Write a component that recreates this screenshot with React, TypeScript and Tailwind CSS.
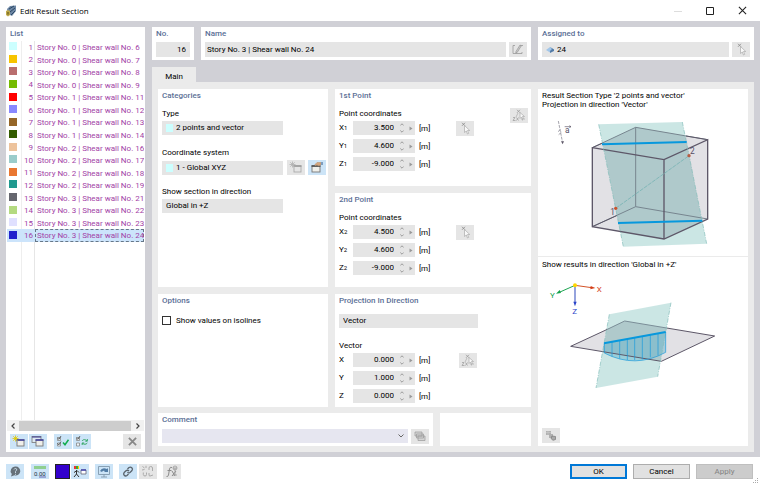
import type { ReactNode } from "react";

const items: [string, string][] = [
  ["#ccffff", "Story No. 0 | Shear wall No. 6"],
  ["#f7c400", "Story No. 0 | Shear wall No. 7"],
  ["#b96e6e", "Story No. 0 | Shear wall No. 8"],
  ["#74bb00", "Story No. 0 | Shear wall No. 9"],
  ["#ff0000", "Story No. 1 | Shear wall No. 11"],
  ["#8888ff", "Story No. 1 | Shear wall No. 12"],
  ["#956628", "Story No. 1 | Shear wall No. 13"],
  ["#335c00", "Story No. 1 | Shear wall No. 14"],
  ["#edc39c", "Story No. 2 | Shear wall No. 16"],
  ["#9acccb", "Story No. 2 | Shear wall No. 17"],
  ["#e97731", "Story No. 2 | Shear wall No. 18"],
  ["#20998e", "Story No. 2 | Shear wall No. 19"],
  ["#65666e", "Story No. 3 | Shear wall No. 21"],
  ["#b4da80", "Story No. 3 | Shear wall No. 22"],
  ["#e0e0ff", "Story No. 3 | Shear wall No. 23"],
  ["#2222cc", "Story No. 3 | Shear wall No. 24"],
];

function Panel({ title, className = "", children }: { title?: string; className?: string; children?: ReactNode }) {
  return (
    <section className={`relative min-w-0 bg-white px-1 pt-px ${className}`}>
      {title && <h2 className="h-3 leading-3 text-[#5b6f96] font-medium">{title}</h2>}
      {children}
    </section>
  );
}

function IconButton({ label, blue = false, className = "", children }: { label: string; blue?: boolean; className?: string; children: ReactNode }) {
  return (
    <button
      type="button"
      aria-label={label}
      className={`flex h-[15px] w-[18px] shrink-0 items-center justify-center ${blue ? "bg-[#cce4f7]" : "bg-[#e5e5e5]"} ${className}`}
    >
      {children}
    </button>
  );
}

function Choice({ id, value, swatch = false, className = "" }: { id: string; value: string; swatch?: boolean; className?: string }) {
  return (
    <div className={`flex h-[14px] shrink-0 items-center bg-[#e5e5e5] pl-1 ${className}`}>
      {swatch && <span className="mr-[3px] h-2 w-[7px] shrink-0 bg-[#ccffff]" />}
      <select id={id} aria-label={value} className="h-[14px] min-w-0 flex-1 appearance-none bg-transparent leading-[14px] outline-none">
        <option>{value}</option>
      </select>
    </div>
  );
}

function Coordinate({ group, axis, sub, value }: { group: string; axis: string; sub?: string; value: string }) {
  const id = `${group}-${axis}`;
  return (
    <div className="flex h-[14px] items-center">
      <label htmlFor={id} className="w-[14px] leading-[14px]">
        {axis}
        {sub && <span className="text-[6px]">{sub}</span>}
      </label>
      <div className="flex h-[14px] w-[62px] items-center bg-[#e5e5e5]">
        <input id={id} defaultValue={value} className="h-[14px] w-[41px] bg-transparent text-right leading-[14px] outline-none" />
        <span className="ml-[6px] flex flex-col gap-1">
          <button type="button" aria-label={`Increase ${axis}`} className="block">
            <svg width="4" height="3" viewBox="0 0 4 3"><path d="M.3 2.5 2 .8l1.700 1.700" fill="none" stroke="#888" strokeWidth=".8" /></svg>
          </button>
          <button type="button" aria-label={`Decrease ${axis}`} className="block">
            <svg width="4" height="3" viewBox="0 0 4 3"><path d="M.3.5 2 2.200 3.700.5" fill="none" stroke="#888" strokeWidth=".8" /></svg>
          </button>
        </span>
        <button type="button" aria-label={`More ${axis}`} className="ml-[5px]">
          <svg width="4" height="5" viewBox="0 0 4 5"><path d="M.5.5 3.500 2.500.5 4.500z" fill="#999" /></svg>
        </button>
      </div>
      <span className="ml-1">[m]</span>
    </div>
  );
}

function PickIcon({ two = false }: { two?: boolean }) {
  return (
    <svg width="14" height="13" viewBox="0 0 14 13" fill="none">
      {two ? (
        <g>
          <path d="M5 .8l3 3M8 .8l-3 3" stroke="#999" strokeWidth=".8" />
          <path d="M6 4 4 8M9 10h4M10.500 9v2.500" stroke="#aaa" strokeWidth=".7" />
          <path d="M1 8.500h2l-2 3h2.500M4.500 8.500l2 3m0-3-2 3" stroke="#999" strokeWidth=".7" />
          <path d="M8 3.500v6l1.500-1.500 1 2 1-.5-1-2h2z" fill="#f8f8f8" stroke="#aaa" strokeWidth=".7" />
        </g>
      ) : (
        <g>
          <path d="M4 .8l3 3M7 .8l-3 3" stroke="#888" strokeWidth=".8" />
          <path d="M6.500 3.500v7L8.300 9l1.200 3 1.200-.6L9.500 8.500h2.300z" fill="#f8f8f8" stroke="#aaa" strokeWidth=".7" />
        </g>
      )}
    </svg>
  );
}

function WindowIcon({ kind }: { kind: "new" | "copy" | "newgray" | "edit" }) {
  const gray = kind === "newgray";
  return (
    <svg width="14" height="13" viewBox="0 0 14 13" fill="none">
      {kind === "copy" && (
        <g>
          <rect x="1" y="1.500" width="9" height="6" fill="#dde8f1" stroke="#777" strokeWidth=".8" />
          <path d="M1 2h9" stroke="#4d4d99" strokeWidth="1.200" />
        </g>
      )}
      <rect x={kind === "edit" ? 2 : 5} y="5" width={kind === "edit" ? 8 : 7} height="6" fill={gray ? "#e5e5e5" : "#efefea"} stroke={gray ? "#aaa" : "#777"} strokeWidth=".9" />
      <path d={kind === "edit" ? "M1.500 5h9" : "M4.500 5h8"} stroke={gray ? "#999" : kind === "edit" ? "#444" : "#3b3b9a"} strokeWidth="1.500" />
      {(kind === "new" || gray) && (
        <path d="M3.500.5v6M.5 3.500h6M1.300 1.300l4.400 4.400M5.700 1.300 1.300 5.700" stroke={gray ? "#b0b0b0" : "#e0c800"} strokeWidth=".8" />
      )}
      {kind === "edit" && (
        <g>
          <path d="M5 3.500 7 1.500h4v2L9 5 7 4l-2 .5z" fill="#d5a67d" stroke="#b99474" strokeWidth=".6" />
          <path d="M11 1h2v3h-2z" fill="#7d9ec0" />
        </g>
      )}
    </svg>
  );
}

function ChecksIcon({ swap = false }: { swap?: boolean }) {
  return (
    <svg width="14" height="13" viewBox="0 0 14 13" fill="none">
      <path d="M1.500 2.500h3v3h-3zM1.500 8h3v3h-3z" fill="#eef5fa" stroke="#888" strokeWidth=".8" />
      <path d={swap ? "M1.500 3l1.500 1.300L5 1" : "M1.500 3l1.500 1.300L5 1M1.500 8.500 3 9.800 5 6.500"} stroke="#444" strokeWidth=".8" />
      {swap ? (
        <path d="M7 6C8.500 4 10.500 4.300 12 6M12.300 4v2.200h-2M12.300 8c-1.500 1.800-3.300 1.500-5 .2M7.200 10V8h2" stroke="#35a866" strokeWidth="1" />
      ) : (
        <path d="M7 7.500 9 9.800l3.500-5" stroke="#12ad50" strokeWidth="1.500" />
      )}
    </svg>
  );
}

function CloseIcon({ size, stroke, weight }: { size: number; stroke: string; weight: number }) {
  return (
    <svg width={size} height={size} viewBox="0 0 10 10" fill="none">
      <path d="M1 1l8 8M9 1 1 9" stroke={stroke} strokeWidth={weight} />
    </svg>
  );
}

function TypeDiagram() {
  return (
    <svg className="mx-auto block h-[144px] w-[210px]" viewBox="24 96 630 432" fill="none" role="img" aria-label="Section through two points">
      <path d="M187 203 317 142 533 179V417L402 477 187 440z" fill="#e2e1e5" />
      <path d="M206 133 457 126 530 491 280 500z" fill="#8cc8c4" fillOpacity=".45" />
      <path d="M218 190 317 142 468 168 516 424 402 477 270 455z" fill="#84999f" fillOpacity=".2" />
      <path d="M317 142V380L187 440M317 380 533 417M317 142 187 203M317 142 533 179" stroke="#77858f" strokeWidth="3" />
      <path d="M187 203 402 239 533 179V417L402 477 187 440zM402 239V477" stroke="#5d5768" strokeWidth="4" />
      <path d="M187 203 218 189M187 440 260 407M468 168 533 179" stroke="#5d5768" strokeWidth="3" />
      <path d="M206 133 280 500M457 126 530 491" stroke="#83bcb9" strokeWidth="2" strokeDasharray="13 4 3 4" />
      <path d="M257 385 477 227" stroke="#81b7b8" strokeWidth="3" strokeDasharray="12 3" />
      <path d="M216 193 470 186M264 429 517 422" stroke="#0798dd" strokeWidth="6" />
      <circle cx="257" cy="385" r="5" fill="#c9542d" />
      <circle cx="477" cy="227" r="5" fill="#b75c43" />
      <text x="241" y="405" fontSize="25" fill="#554e65">1</text>
      <text x="480" y="223" fontSize="25" fill="#554e65">2</text>
      <path d="M85 123 97 184M84 155l9-8M86 164l10-9" stroke="#777583" strokeWidth="2" strokeDasharray="9 3" />
      <path d="M93 184h9l-4 9z" fill="#5d5768" />
      <text x="105" y="158" fontSize="25" fill="#554e65">a</text>
      <path d="M104 140h19m-5-3 5 3-5 3" stroke="#5d5768" strokeWidth="2" />
    </svg>
  );
}

function DirectionDiagram() {
  return (
    <svg className="mx-auto block h-[153px] w-[210px]" viewBox="24 51 630 459" fill="none" role="img" aria-label="Results in direction Z">
      <path d="M122 274 284 198 554 243 394 319z" fill="#e2e1e5" />
      <path d="M238 178 423 143 383 365 198 399z" fill="#8cc8c4" fillOpacity=".45" />
      <path d="M232 223 284 198 410 219 390 317 218 288z" fill="#84999f" fillOpacity=".2" />
      <path d="M222 265 407 231V292Q315 342 222 294z" fill="#6ab5cd" fillOpacity=".5" />
      <path d="M122 274 232 223M410 219 554 243 394 319 122 274" stroke="#5d5768" strokeWidth="3" />
      <path d="M232 223 284 198 410 219" stroke="#7b8e98" strokeWidth="3" />
      <path d="M238 178 198 399M423 143 383 365" stroke="#83bcb9" strokeWidth="2" strokeDasharray="13 4 3 4" />
      <path d="M223 265V294Q315 342 407 292V231M246 261v43M269 257v54M292 252v63M314 248v67M337 244v69M361 240v67M384 235v66" stroke="#1698dc" strokeWidth="2" />
      <path d="M222 265 407 231" stroke="#0798dd" strokeWidth="6" />
      <path d="M135 91l50 7" stroke="#d45328" strokeWidth="3" />
      <path d="M182 93l14 6-15 4z" fill="#d43e18" />
      <path d="M135 91 90 111" stroke="#1da552" strokeWidth="3" />
      <path d="M78 116l11-11 4 9z" fill="#12a04a" />
      <path d="M135 91v52" stroke="#6175cc" strokeWidth="4" />
      <path d="M130 140h10l-5 14z" fill="#2943c9" />
      <circle cx="135" cy="91" r="6" fill="#ffd500" />
      <text x="200" y="111" fontSize="24" fill="#d43e18">X</text>
      <text x="60" y="128" fontSize="24" fill="#12a04a">Y</text>
      <text x="127" y="178" fontSize="24" fill="#2943c9">Z</text>
    </svg>
  );
}

function BottomTools() {
  return (
    <div className="flex items-center">
      <IconButton blue label="Help">
        <svg width="14" height="13" viewBox="0 0 14 13">
          <path d="M7.500 1.500a4.500 4.500 0 1 1-1 8.800L3 11.500l.8-2.500A4.500 4.500 0 0 1 7.500 1.500z" fill="#66717a" />
          <path d="M6 4.500Q6.500 3.300 7.800 3.500 9.200 3.800 8.600 5 8 6 7.500 6.500V8m0 .8v1" fill="none" stroke="#c3d5e2" strokeWidth="1" />
        </svg>
      </IconButton>
      <IconButton blue label="Units and decimal places" className="ml-[7px]">
        <svg width="14" height="13" viewBox="0 0 14 13">
          <path d="M1 1h12v3H1z" fill="#8fcf90" />
          <text x="1" y="11" fontSize="6" fill="#223344">0.00</text>
          <path d="M6 12h7" stroke="#333399" strokeWidth=".7" />
        </svg>
      </IconButton>
      <button type="button" aria-label="Color" className="ml-[6px] size-[15px] shrink-0 border border-[#222] bg-[#3300cc]" />
      <IconButton blue label="Display" className="ml-px">
        <svg width="14" height="13" viewBox="0 0 14 13" fill="none">
          <path d="M1 1h2v3H1z" fill="#e33" /><path d="M3 1h2v3H3z" fill="#3a3" /><path d="M5 1h1v3H5z" fill="#fc0" />
          <path d="M3.500 5v4L1 12M3.500 9 6 12M1 7.500l3-2 2 2" stroke="#333" strokeWidth="1" />
          <path d="M8 5h5v4H8z" fill="#fff" stroke="#667" strokeWidth=".8" /><path d="M8 5h5" stroke="#33a" strokeWidth="1.300" />
        </svg>
      </IconButton>
      <IconButton blue label="Visibility" className="ml-[6px]">
        <svg width="14" height="13" viewBox="0 0 14 13" fill="none">
          <path d="M1.500 1.500h11v8h-11zM7 9.500V12M4 12h6" stroke="#8198ab" strokeWidth=".9" />
          <path d="M3 6q2-4 7-2l1-1v4H7l1-1q-2-1-3 1z" fill="#527da6" />
        </svg>
      </IconButton>
      <IconButton blue label="Link" className="ml-[6px]">
        <svg width="14" height="13" viewBox="0 0 14 13" fill="none">
          <path d="M6.500 4 8 2.500q1.500-1 2.800.2t.2 2.800L9 7.500Q7.500 8.500 6.500 7M8 6Q6.500 4.500 5 5.800L3.200 7.500q-1.200 1.500 0 2.800t2.800.2L7.500 9" stroke="#59636c" strokeWidth="1.300" />
        </svg>
      </IconButton>
      <IconButton label="Unlink" className="ml-[2px]">
        <svg width="14" height="13" viewBox="0 0 14 13" fill="none">
          <path d="M8 5V3q0-1.500 1.700-1.500T11.500 3v3M5.500 7.500v2Q5.500 11 4 11T2.300 9.500v-2M8 8v2.500q1 1 2 .2l2-.7M1.500 1.500l2 1.500M5 .8V3M1 5l2.500-.5" stroke="#aaa" strokeWidth="1" />
        </svg>
      </IconButton>
      <IconButton label="Formula" className="ml-[6px]">
        <svg width="14" height="13" viewBox="0 0 14 13" fill="none">
          <path d="M7 2.500Q5 1.500 4.500 4L3.500 10q-.5 2-2 1.500M2.500 5.500h4M7 6l3 5m1-5-4 5" stroke="#8b8b8b" strokeWidth="1" />
          <circle cx="10" cy="3" r="2" stroke="#999" strokeWidth=".8" /><path d="M8 3h4M10 3v7m-2 0h4" stroke="#999" strokeWidth=".8" />
        </svg>
      </IconButton>
    </div>
  );
}

export default function App() {
  return (
    <div className="flex h-screen flex-col bg-white font-['Roboto','Noto_Sans',sans-serif] text-[8px] leading-[9px] text-black">
      <header className="flex h-[21px] shrink-0 items-center pr-[13px] pl-[5px]">
        <svg width="12" height="12" viewBox="0 0 12 12">
          <path d="M2 4 5 1l6-.5V6L7 11 3 9z" fill="#6d87a5" />
          <path d="M4 4 9 1M5 7l5-4M6 10l4-4" stroke="#2b4865" strokeWidth="1" />
          <path d="M1 6l2-1 2 1v4l-2 1.500L1 10z" fill="#bda84b" /><path d="M3 7v3M2 8h2" stroke="#655719" strokeWidth=".7" />
        </svg>
        <h1 className="ml-[3px] font-['Open_Sans','Noto_Sans',sans-serif]">Edit Result Section</h1>
        <div className="ml-auto flex items-center gap-6">
          <button type="button" aria-label="Minimize"><svg width="8" height="8" viewBox="0 0 8 8"><path d="M0 4.500h8" stroke="#ddd" /></svg></button>
          <button type="button" aria-label="Maximize"><svg width="8" height="8" viewBox="0 0 8 8"><path d="M.5.5h7v7h-7z" fill="none" stroke="#222" /></svg></button>
          <button type="button" aria-label="Close"><CloseIcon size={9} stroke="#222" weight={1.2} /></button>
        </div>
      </header>

      <main className="flex min-h-0 flex-1 gap-[7px] bg-[#d0d0d6] px-[6px] pt-[6px] pb-[5px]">
        <aside className="flex w-[139px] shrink-0 flex-col bg-white">
          <h2 className="ml-1 h-[14px] pt-px leading-3 font-medium text-[#5b6f96]">List</h2>
          <div className="mx-px flex min-h-0 flex-1 flex-col bg-[linear-gradient(to_right,transparent_14px,#eeeeee_14px,#eeeeee_15px,transparent_15px,transparent_27px,#e6e6e6_27px,#e6e6e6_28px,transparent_28px)]">
            <ul className="grid h-[201px] grid-rows-16">
              {items.map(([color, name], i) => (
                <li key={name} className={`flex items-center overflow-hidden whitespace-nowrap text-[#a23fa6] ${i === 15 ? "bg-[#cce4fb]" : ""}`}>
                  <span className="mb-[2px] ml-[2px] size-2 shrink-0" style={{ backgroundColor: color }} />
                  <span className="w-4 shrink-0 text-right">{i + 1}</span>
                  <span className={`ml-[2px] h-full min-w-0 flex-1 border pl-px leading-[11px] ${i === 15 ? "border-dashed border-[#667788]" : "border-transparent"}`}>{name}</span>
                </li>
              ))}
            </ul>
          </div>
          <div className="mx-px flex h-[11px] items-center bg-[#f1f1f1]">
            <button type="button" aria-label="Scroll left" className="flex w-3 justify-center"><svg width="4" height="6" viewBox="0 0 4 6"><path d="M3.500.5 1 3l2.500 2.500" fill="none" stroke="#444" strokeWidth="1.200" /></svg></button>
            <span className="h-[10px] flex-1 bg-[#cdcdcd]" />
            <button type="button" aria-label="Scroll right" className="flex w-[13px] justify-center"><svg width="4" height="6" viewBox="0 0 4 6"><path d="M.5.5 3 3 .5 5.500" fill="none" stroke="#444" strokeWidth="1.200" /></svg></button>
          </div>
          <div className="flex gap-px px-1 pt-[3px] pb-[3px]">
            <IconButton blue label="New"><WindowIcon kind="new" /></IconButton>
            <IconButton blue label="Copy"><WindowIcon kind="copy" /></IconButton>
            <IconButton blue label="Select all" className="ml-[6px]"><ChecksIcon /></IconButton>
            <IconButton blue label="Invert selection"><ChecksIcon swap /></IconButton>
            <IconButton label="Delete" className="ml-auto"><CloseIcon size={9} stroke="#888" weight={2} /></IconButton>
          </div>
        </aside>

        <div className="flex min-w-0 flex-1 flex-col">
          <div className="grid h-[33px] shrink-0 grid-cols-[42px_330fr_216fr] gap-[7px]">
            <Panel>
              <label htmlFor="no" className="block h-3 leading-3 font-medium text-[#5b6f96]">No.</label>
              <input id="no" defaultValue="16" className="mt-[2px] block h-[15px] w-full bg-[#e5e5e5] pr-1 text-right outline-none" />
            </Panel>
            <Panel>
              <label htmlFor="name" className="block h-3 leading-3 font-medium text-[#5b6f96]">Name</label>
              <div className="mt-[2px] flex gap-[3px]">
                <input id="name" defaultValue="Story No. 3 | Shear wall No. 24" className="block h-[15px] min-w-0 flex-1 bg-[#e5e5e5] pl-[2px] outline-none" />
                <IconButton label="Edit name">
                  <svg width="14" height="13" viewBox="0 0 14 13" fill="none"><path d="M4 2.500H2v8h9V9M9 2.500h3" stroke="#999" strokeWidth=".8" /><path d="M5 8.500 9 2l1.300.8-4 6.500-1.500.8z" fill="#ccc" stroke="#888" strokeWidth=".6" /></svg>
                </IconButton>
              </div>
            </Panel>
            <Panel>
              <label htmlFor="assigned" className="block h-3 leading-3 font-medium text-[#5b6f96]">Assigned to</label>
              <div className="mt-[2px] flex gap-[3px]">
                <div className="flex h-[15px] min-w-0 flex-1 items-center bg-[#e5e5e5] pl-1">
                  <svg width="9" height="8" viewBox="0 0 9 8"><path d="M0 4 4 1l4 2.500L4 6.500z" fill="#a1c5e8" /><path d="M4 1l4 2.500V5L4 7V5l2-2z" fill="#537ba6" /></svg>
                  <input id="assigned" defaultValue="24" className="ml-[2px] h-[15px] min-w-0 flex-1 bg-transparent outline-none" />
                </div>
                <IconButton label="Select object"><PickIcon /></IconButton>
              </div>
            </Panel>
          </div>

          <div role="tablist" className="mt-[7px] flex h-[15px] shrink-0">
            <button type="button" role="tab" aria-selected="true" className="w-11 bg-[#ebebeb] pt-[3px]">Main</button>
          </div>

          <div className="grid min-h-0 flex-1 grid-cols-[170fr_196fr_210fr] gap-[7px] bg-[#ebebeb] px-[6px] pt-[7px] pb-[6px]">
            <div className="col-span-2 flex min-h-0 flex-col gap-[6px]">
              <div className="grid min-h-0 flex-1 grid-cols-[170fr_196fr] grid-rows-[198fr_113fr] gap-[7px]">
                <Panel title="Categories">
                  <label htmlFor="type" className="mt-[6px] block h-3 leading-3">Type</label>
                  <Choice id="type" value="2 points and vector" swatch className="mt-px w-[121px]" />
                  <label htmlFor="system" className="mt-3 block h-3 leading-3">Coordinate system</label>
                  <div className="mt-px flex items-center">
                    <Choice id="system" value="1 - Global XYZ" swatch className="w-[121px]" />
                    <IconButton label="New coordinate system" className="ml-1"><WindowIcon kind="newgray" /></IconButton>
                    <IconButton blue label="Edit coordinate system" className="ml-[3px]"><WindowIcon kind="edit" /></IconButton>
                  </div>
                  <label htmlFor="direction" className="mt-[11px] block h-3 leading-3">Show section in direction</label>
                  <Choice id="direction" value="Global in +Z" className="mt-px w-[121px]" />
                </Panel>
                <div className="grid min-w-0 grid-rows-[97fr_94fr] gap-[7px]">
                  {[
                    { title: "1st Point", sub: "1", values: ["3.500", "4.600", "-9.000"] },
                    { title: "2nd Point", sub: "2", values: ["4.500", "4.600", "-9.000"] },
                  ].map((point) => (
                    <Panel key={point.title} title={point.title}>
                      <p className="mt-[6px] h-3 leading-3">Point coordinates</p>
                      <div className="mt-px flex">
                        <div className="flex flex-col gap-1">
                          {["X", "Y", "Z"].map((axis, i) => (
                            <Coordinate key={axis} group={`point${point.sub}`} axis={axis} sub={point.sub} value={point.values[i]} />
                          ))}
                        </div>
                        <IconButton label={`Pick ${point.title}`} className="ml-[26px]"><PickIcon /></IconButton>
                      </div>
                      {point.sub === "1" && <IconButton label="Pick two points" className="absolute top-[19px] right-[3px]"><PickIcon two /></IconButton>}
                    </Panel>
                  ))}
                </div>
                <Panel title="Options">
                  <label className="mt-[9px] flex items-center gap-[5px]">
                    <input type="checkbox" className="size-[9px] appearance-none border border-[#333] bg-white" />
                    Show values on isolines
                  </label>
                </Panel>
                <Panel title="Projection In Direction">
                  <Choice id="projection" value="Vector" className="mt-[7px] w-[139px]" />
                  <p className="mt-3 h-3 leading-3">Vector</p>
                  <div className="mt-px flex">
                    <div className="flex flex-col gap-1">
                      <Coordinate group="vector" axis="X" value="0.000" />
                      <Coordinate group="vector" axis="Y" value="1.000" />
                      <Coordinate group="vector" axis="Z" value="0.000" />
                    </div>
                    <IconButton label="Pick vector" className="ml-[29px]"><PickIcon two /></IconButton>
                  </div>
                </Panel>
              </div>
              <div className="grid h-[33px] shrink-0 grid-cols-[275fr_91fr] gap-[7px]">
                <Panel>
                  <label htmlFor="comment" className="block h-3 leading-3 font-medium text-[#5b6f96]">Comment</label>
                  <div className="mt-[3px] flex gap-[3px]">
                    <div className="flex h-[14px] flex-1 items-center bg-[#e6e6f0] pr-1">
                      <select id="comment" className="h-[14px] min-w-0 flex-1 appearance-none bg-transparent outline-none"><option></option></select>
                      <svg width="6" height="4" viewBox="0 0 6 4"><path d="M.5.5 3 3 5.500.5" fill="none" stroke="#666" /></svg>
                    </div>
                    <IconButton label="Comment library">
                      <svg width="14" height="13" viewBox="0 0 14 13" fill="#d4d4d4" stroke="#999" strokeWidth=".7"><path d="M2 2h7v4H2zM3.500 4h7v4h-7zM5 6h7v4.500H5z" /></svg>
                    </IconButton>
                  </div>
                </Panel>
                <Panel />
              </div>
            </div>

            <section className="flex min-w-0 flex-col bg-white">
              <div className="h-[168px] border-b border-[#ebebeb]">
                <p className="px-1 pt-[2px] pb-[3px]">Result Section Type '2 points and vector'<br />Projection in direction 'Vector'</p>
                <TypeDiagram />
              </div>
              <p className="px-1 pt-[3px] pb-[3px]">Show results in direction 'Global in +Z'</p>
              <DirectionDiagram />
              <IconButton label="Render settings" className="mt-auto mb-[3px] ml-1">
                <svg width="14" height="13" viewBox="0 0 14 13"><path d="M2 2h5v4H2zM5 5h4v4H5z" fill="#b0b0b0" /><path d="M2 3.500h5M4 2v4" stroke="#ccc" strokeWidth=".6" /><path d="M8 7l3.500.5v3l-2.500.8L7 9.500z" fill="#aaa" stroke="#777" strokeWidth=".7" /></svg>
              </IconButton>
            </section>
          </div>
        </div>
      </main>

      <footer className="relative flex h-[29px] shrink-0 items-center justify-between pr-[7px] pl-[6px]">
        <BottomTools />
        <div className="flex gap-[6px]">
          <button type="button" className="h-[15px] w-[57px] border-2 border-[#0078d7] bg-[#e1e1e1] leading-[11px]">OK</button>
          <button type="button" className="h-[15px] w-[57px] border border-[#adadad] bg-[#e1e1e1] leading-[13px]">Cancel</button>
          <button type="button" disabled className="h-[15px] w-[57px] border border-[#bfbfbf] bg-[#cccccc] leading-[13px] text-[#838383]">Apply</button>
        </div>
        <svg className="absolute right-px bottom-px" width="7" height="7" viewBox="0 0 7 7" fill="#aaa"><path d="M5 0h1v1H5zM3 2h1v1H3zM5 2h1v1H5zM1 4h1v1H1zM3 4h1v1H3zM5 4h1v1H5z" /></svg>
      </footer>
    </div>
  );
}
